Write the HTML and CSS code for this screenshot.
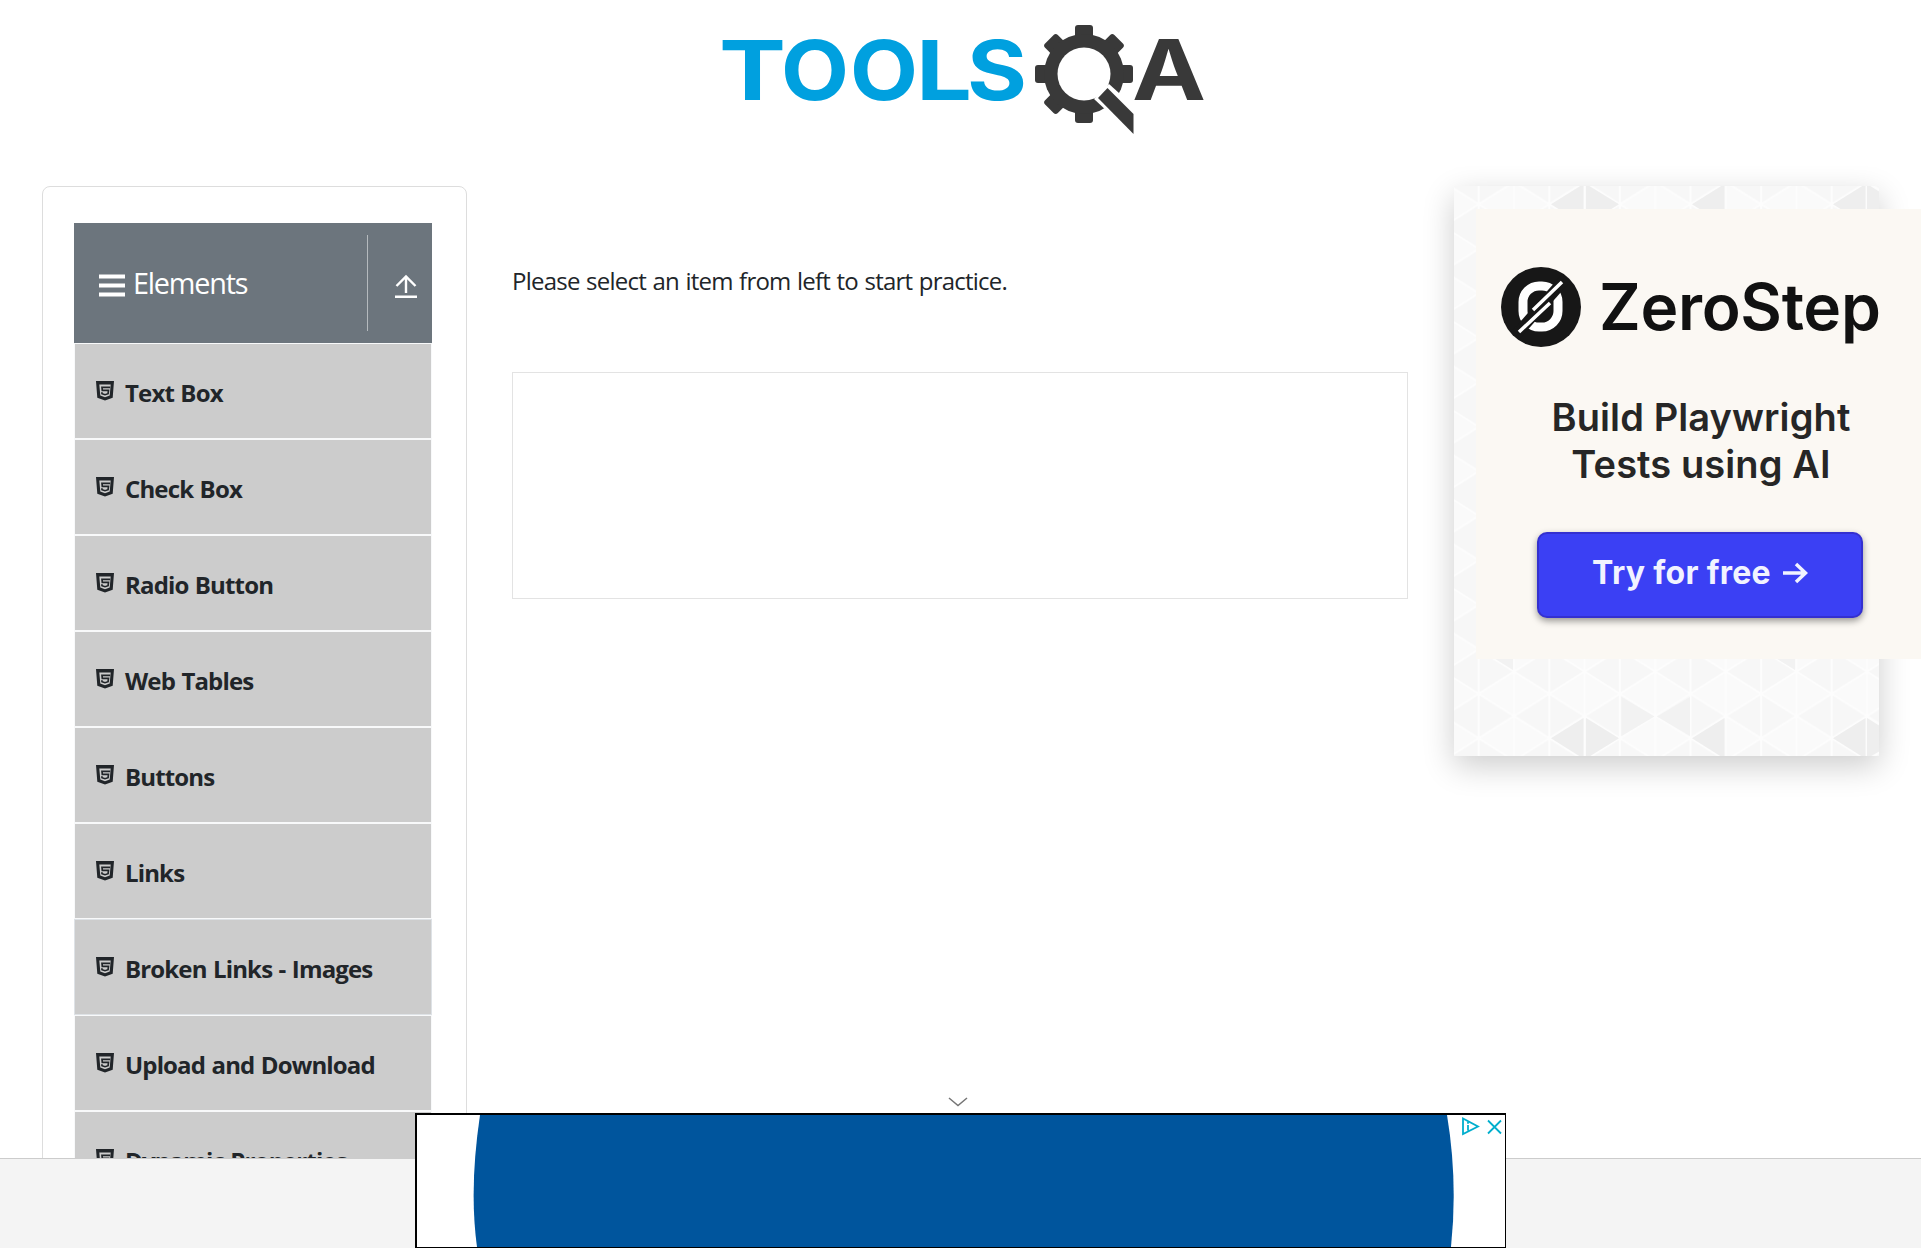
FILE: index.html
```html
<!DOCTYPE html>
<html lang="en">
<head>
<meta charset="utf-8">
<title>ToolsQA</title>
<link rel="stylesheet" href="styles.css">
</head>
<body>
<svg class="defs" width="0" height="0" aria-hidden="true">
  <symbol id="html5" viewBox="0 0 18 20">
    <path fill="currentColor" fill-rule="evenodd" d="M0 0h18l-1.300 16.800L9 19.500l-7.700-2.700zM3.300 3.600l1 11L9 16.300l4.700-1.700 1-11z"/>
    <path fill="none" stroke="currentColor" stroke-width="1.700" d="M14.200 6.400H6l.3 3h6.200l-.4 3.300-3.100 1-3-1-.1-1.400"/>
  </symbol>
</svg>
<header class="topbar">
  <svg class="logo" width="520" height="140" viewBox="0 0 520 140">
    <text class="logo-tools" y="90"><tspan x="19" textLength="67" lengthAdjust="spacingAndGlyphs">T</tspan><tspan x="81" textLength="68" lengthAdjust="spacingAndGlyphs">O</tspan><tspan x="150" textLength="68" lengthAdjust="spacingAndGlyphs">O</tspan><tspan x="216" textLength="56" lengthAdjust="spacingAndGlyphs">L</tspan><tspan x="267" textLength="60" lengthAdjust="spacingAndGlyphs">S</tspan></text>
    <g transform="translate(384 64)" fill="#393939">
      <rect x="-9" y="-49" width="18" height="98" rx="3"/>
      <rect x="-9" y="-49" width="18" height="98" rx="3" transform="rotate(45)"/>
      <rect x="-9" y="-49" width="18" height="98" rx="3" transform="rotate(90)"/>
      <rect x="-9" y="-49" width="18" height="98" rx="3" transform="rotate(135)"/>
      <circle r="40"/>
      <circle r="26.500" fill="#fff"/>
      <path fill="#fff" d="M10 25L25 10l40 36v30z"/>
      <path d="M14 24l9.500-10L49.500 40v20z"/>
    </g>
    <text class="logo-a" x="432" y="90" textLength="74" lengthAdjust="spacingAndGlyphs">A</text>
  </svg>
</header>
<main class="layout">
  <nav class="sidebar">
    <div class="group-head">
      <svg class="menu" width="26" height="24" viewBox="0 0 26 24"><path d="M0 2.500h26M0 11.500h26M0 20.500h26" stroke="#fff" stroke-width="4"/></svg>
      <span class="group-title">Elements</span>
      <span class="toggle"><svg width="24" height="25" viewBox="0 0 24 25" fill="none" stroke="#fff" stroke-width="2.400"><path d="M12 19V3M2.500 12L12 2.500l9.500 9.500M1 22.800h22"/></svg></span>
    </div>
    <ul class="items">
      <li><svg><use href="#html5"/></svg><span>Text Box</span></li>
      <li><svg><use href="#html5"/></svg><span>Check Box</span></li>
      <li><svg><use href="#html5"/></svg><span>Radio Button</span></li>
      <li><svg><use href="#html5"/></svg><span>Web Tables</span></li>
      <li><svg><use href="#html5"/></svg><span>Buttons</span></li>
      <li><svg><use href="#html5"/></svg><span>Links</span></li>
      <li class="focus"><svg><use href="#html5"/></svg><span>Broken Links - Images</span></li>
      <li><svg><use href="#html5"/></svg><span>Upload and Download</span></li>
      <li><svg><use href="#html5"/></svg><span>Dynamic Properties</span></li>
    </ul>
  </nav>
  <section class="content">
    <p>Please select an item from left to start practice.</p>
    <div class="placeholder"></div>
  </section>
  <aside class="promo">
    <svg class="pattern" width="425" height="570" viewBox="0 0 425 570">
      <defs>
        <pattern id="tri" width="70.600" height="44.500" patternUnits="userSpaceOnUse" x="24.700" y="18.300">
          <rect width="70.600" height="44.500" fill="#fafafa"/>
          <path fill="#f7f7f7" d="M0 0L35.300 22.250 0 44.500zM70.600 0v44.500L35.300 22.250z"/>
          <path fill="none" stroke="#fdfdfd" stroke-width="2" d="M0 0v44.500M35.300 0v44.500M70.600 0v44.500M0 0l70.600 44.500M70.600 0L0 44.500"/>
        </pattern>
        <g id="shade" fill="#eee">
          <path d="M97 18.300L129.500-2v40.600zM132-2L165 18.300 132 38.600zM238 18.300L270.500-2v40.600zM379 18.300L411.500-2v40.600zM413-2l12 7.500v26l-12 7z"/>
        </g>
      </defs>
      <rect width="425" height="570" fill="url(#tri)"/>
      <use href="#shade"/>
      <use href="#shade" y="534"/>
      <path fill="#f2f2f2" d="M167.500 511l33 19.500-33 19.500zM236 511v39l-33-19.500zM27 464l32-20v40zM309 464l32-20v40z"/>
    </svg>
    <div class="ad">
      <div class="brand">
        <svg width="80" height="82" viewBox="0 0 80 82"><circle cx="40" cy="41" r="40" fill="#171717"/><rect x="22" y="20" width="35" height="41" rx="16" fill="none" stroke="#fff" stroke-width="9"/><path d="M14 70L65 12" stroke="#171717" stroke-width="11"/><path d="M18 66l31-29M32 44L61 16" stroke="#fff" stroke-width="3.500"/></svg>
        <span class="brand-name">ZeroStep</span>
      </div>
      <p class="tagline">Build Playwright<br>Tests using AI</p>
      <div class="cta"><span>Try for free</span><svg width="26" height="22" viewBox="0 0 26 22" fill="none" stroke="#f1f3ff" stroke-width="3.500"><path d="M1 11h22M14 2l9.500 9-9.500 9"/></svg></div>
    </div>
  </aside>
</main>
<footer class="footer"></footer>
<svg class="collapse" width="20" height="10" viewBox="0 0 20 10"><path d="M1 1l9 7.500L19 1" fill="none" stroke="#757575" stroke-width="1.500"/></svg>
<div class="banner">
  <svg width="1088" height="132" viewBox="0 0 1088 132">
    <path fill="#00559d" d="M63 0Q52 74 60 132H1034Q1041 66 1030 0z"/>
    <g fill="none" stroke="#00aecd" stroke-width="1.800"><path d="M1046 3.500v15.500L1061 11.500zM1051 10v5.500M1071 5.500l13 13M1084 5.500l-13 13"/><path d="M1051 7v1.800"/></g>
  </svg>
</div>
</body>
</html>
```
FILE: styles.css
```css
* { box-sizing: border-box; }
html, body { height: 100%; overflow: hidden; }
body { margin: 0; display: flex; flex-direction: column; height: 1248px; background: #fff; color: #212529; font-family: "Open Sans", "Noto Sans", sans-serif; font-size: 24px; }
p, ul { margin: 0; padding: 0; list-style: none; }
svg { display: block; flex: none; }
.defs { position: absolute; }
.topbar { flex: none; height: 186px; padding: 10px 0 0 700px; }
.logo-tools { font: 700 82.500px Inter, sans-serif; fill: #00a0df; }
.logo-a { font: 700 84px Inter, sans-serif; fill: #393939; }
.layout { flex: none; display: flex; align-items: flex-start; height: 972px; padding-left: 42px; clip-path: inset(-20px 0 0 0); }
.sidebar { width: 425px; height: 1100px; border: 1px solid #ddd; border-radius: 8px; padding: 36px 34px 0 31px; }
.group-head { display: flex; align-items: center; width: 358px; height: 120px; padding-left: 25px; background: #6c757d; color: #fff; }
.menu { margin-top: 5px; }
.group-title { width: 242px; padding-left: 8px; font-size: 28.800px; line-height: 40px; letter-spacing: -1.2px; }
.toggle { display: flex; align-items: center; height: 96px; padding: 7px 0 0 26px; border-left: 1px solid #b5babe; }
.items li { display: flex; align-items: center; width: 358px; height: 96px; border: 1px solid #f8f9fa; background: #ccc; padding-left: 21px; font-weight: 700; letter-spacing: -0.85px; word-spacing: 1px; white-space: nowrap; }
.items li svg { width: 18px; height: 20px; }
.items li span { padding-left: 11px; line-height: 36px; margin-top: 3px; }
.items .focus { border-color: #dee2e6; }
.content { width: 896px; margin-left: 45px; padding-top: 77px; }
.content p { height: 36px; line-height: 36px; letter-spacing: -0.77px; word-spacing: 1px; white-space: nowrap; }
.placeholder { height: 227px; margin-top: 73px; border: 1px solid #e3e3e3; }
.promo { flex: none; display: grid; width: 425px; height: 570px; margin-left: 46px; box-shadow: 0 10px 30px rgba(0,0,0,.2); }
.promo > * { grid-area: 1 / 1; }
.ad { width: 450px; height: 450px; margin: 23px 0 0 22px; padding-top: 57px; background: #fbf8f3; font-family: Inter, sans-serif; color: #262626; }
.brand { display: flex; align-items: center; height: 82px; padding-left: 25px; }
.brand-name { padding-left: 18px; font-size: 64px; font-weight: 600; letter-spacing: -0.3px; color: #111; line-height: 82px; }
.tagline { margin-top: 46px; text-align: center; font-size: 38px; font-weight: 600; letter-spacing: 0.1px; line-height: 47px; white-space: nowrap; }
.cta { display: flex; align-items: center; justify-content: center; gap: 11px; width: 326px; height: 86px; margin: 44px 0 0 61px; padding-bottom: 5px; border-radius: 10px; border: 2px solid #3430d0; background: #3b40f4; box-shadow: 0 3px 7px rgba(0,0,0,.4); color: #f1f3ff; font-size: 32px; font-weight: 700; letter-spacing: 0.3px; white-space: nowrap; }
.footer { flex: none; height: 90px; border-top: 1px solid #ccc; background: #f4f4f4; }
.collapse { position: absolute; left: 948px; top: 1097px; }
.banner { position: absolute; left: 415px; top: 1113px; width: 1091px; height: 135px; border: solid #000; border-width: 2px 1px 1px 2px; background: #fff; }
```
